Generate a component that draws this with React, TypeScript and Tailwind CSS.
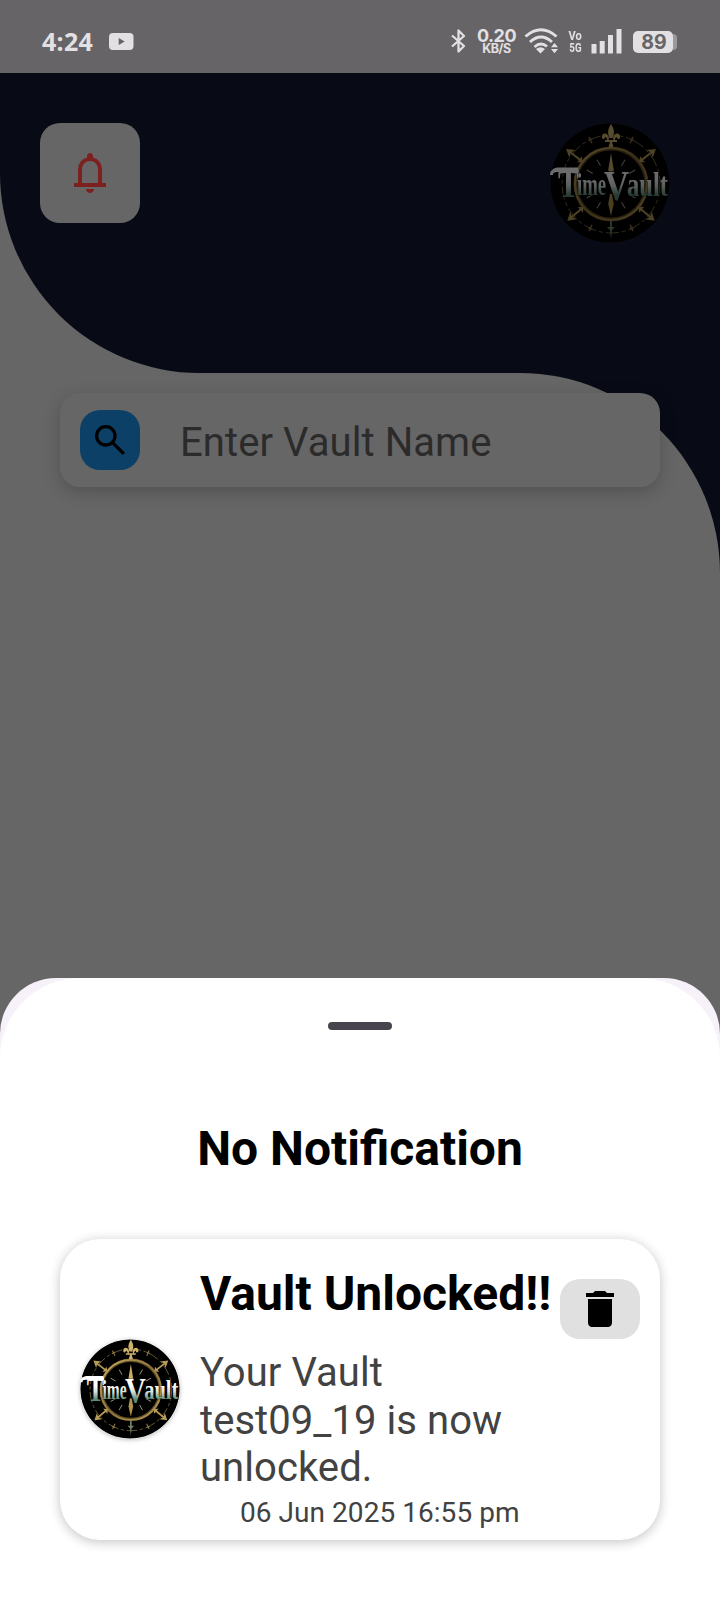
import React from "react";

function Logo({ className, id }: { className: string; id: string }) {
  const ticks = [30, 60, 120, 150, 210, 240, 300, 330];
  return (
    <svg viewBox="0 0 120 120" className={className} aria-hidden="true">
      <defs>
        <linearGradient id={`${id}-gold`} x1="0" y1="0" x2="1" y2="1">
          <stop offset="0" stopColor="#cdb267" />
          <stop offset="0.5" stopColor="#8c733a" />
          <stop offset="1" stopColor="#b39a55" />
        </linearGradient>
        <linearGradient id={`${id}-word`} gradientUnits="userSpaceOnUse" x1="0" y1="46" x2="0" y2="77">
          <stop offset="0.3" stopColor="#ffffff" />
          <stop offset="0.55" stopColor="#d5e2db" />
          <stop offset="0.85" stopColor="#5d8c75" />
        </linearGradient>
      </defs>
      <circle cx="60" cy="60" r="59.5" fill="#000" />
      <circle cx="61" cy="61" r="49" fill="none" stroke="#77683c" strokeWidth="1" strokeDasharray="13 3 4 3" />
      <circle cx="61" cy="61" r="35.500" fill="none" stroke="#5c4b22" strokeWidth="4" />
      <circle cx="61" cy="61" r="36" fill="none" stroke={`url(#${id}-gold)`} strokeWidth="2.200" />
      {ticks.map((a) => (
        <path key={a} d="M61 33v7" stroke="#a3a08f" strokeWidth="1" transform={`rotate(${a} 61 61)`} />
      ))}
      {[-52, 52, 130, 230].map((a) => (
        <g key={a} transform={`rotate(${a} 61 61)`} fill="#b79c57">
          <path d="M60 9h2v12h3l-4 4-4-4h3zM61 4l5 8-5-2-5 2z" />
        </g>
      ))}
      {[-25, 25, 155, 205].map((a) => (
        <path
          key={a}
          d="M61 9v7M59 12h4"
          stroke="#8e7a43"
          strokeWidth="1.3"
          transform={`rotate(${a} 61 61)`}
        />
      ))}
      <g fill="#d0b36a">
        <path d="M61 1c3 5 4 8 1.500 14H59.500C57 9 58 6 61 1z" />
        <path d="M59 15c-1-6-8-6-7 0 1 2 3 1 3-1 2 0 2 3 3 5zM63 15c1-6 8-6 7 0-1 2-3 1-3-1-2 0-2 3-3 5z" />
        <path d="M55 17h12v2H55zM60 19h2l1.500 5h-5z" />
      </g>
      <path d="M60 98h2v6h3l-3 3-1 9-1-9-3-3h3z" fill="#6f8465" />
      <path d="M61 30l2.800 17-1.800 4h-2l-1.800-4z" fill="#c8ad66" />
      <path d="M61 93l-2.800-12 1.800-10h2l1.800 10z" fill="#b19349" />
      <g
        fill={`url(#${id}-word)`}
        stroke="#000"
        strokeWidth="0.800"
        paintOrder="stroke"
        fontFamily="'Liberation Serif', serif"
        fontWeight="700"
      >
        <text x="8" y="74" fontSize="40" textLength="21" lengthAdjust="spacingAndGlyphs">T</text>
        <text x="27" y="71.500" fontSize="32" textLength="29" lengthAdjust="spacingAndGlyphs">ime</text>
        <text x="54" y="77" fontSize="42" textLength="25" lengthAdjust="spacingAndGlyphs">V</text>
        <text x="77" y="72.500" fontSize="33" textLength="41" lengthAdjust="spacingAndGlyphs">ault</text>
      </g>
      <path d="M0 52c0-5 4-7.500 9-7.500h19l1 4.500H10c-5 0-7 0-7 3z" fill="#fff" />
    </svg>
  );
}

function StatusBar() {
  return (
    <div className="flex h-[73px] items-start bg-[#676467] pt-[28px] pl-[42px] text-[#e2e0e2]">
      <span className="w-[67px] font-['Noto_Sans'] text-[25px] leading-[27px] font-bold tracking-[0.300px]">4:24</span>
      <svg className="mt-[5px] h-[17px] w-[25px]" viewBox="0 0 25 17">
        <rect width="24.500" height="17" rx="4" fill="#e2e0e2" />
        <path d="M9.700 5v7l6-3.500z" fill="#676467" />
      </svg>
      <svg className="ml-[317px] h-[26px] w-[15px]" viewBox="0 0 15 26" fill="none" stroke="#e2e0e2" strokeWidth="2.300">
        <path d="M1 7.500l12 10.500-5.500 5.500V2.500L13 8 1 18.500" strokeLinejoin="round" />
      </svg>
      <div className="ml-[10px] flex w-[41px] flex-col items-center font-['Inter'] font-bold">
        <span className="text-[18px] leading-[16px] tracking-[-0.500px]">0.20</span>
        <span className="text-[12.500px] leading-[10px] tracking-[-0.500px]">KB/S</span>
      </div>
      <svg className="ml-[7px] h-[26px] w-[36px]" viewBox="0 0 36 26" fill="none" stroke="#e2e0e2" strokeWidth="2.900">
        <path d="M1.500 8.500Q17-5 32.500 8.500M6 14Q17 4 28 14M10.500 19Q17 13.500 23 18.500" />
        <path d="M12 21q4.500-3.500 9 0L16.500 25.500zM30.500 15l3.500 4.200h-7zM30.500 25.300l3.500-4.200h-7z" fill="#e2e0e2" stroke="none" />
      </svg>
      <div className="ml-[7px] flex w-[17px] flex-col items-center pt-[2px] font-['Roboto'] text-[13.500px] leading-[11.500px] font-bold">
        <span className="scale-x-[0.82]">Vo</span>
        <span className="scale-x-[0.72]">5G</span>
      </div>
      <svg className="ml-[7px] h-[26px] w-[31px]" viewBox="0 0 31 26" fill="#e2e0e2">
        <path d="M.500 16h5v9.500h-5zM8.700 13h5v12.500h-5zM17 7h5v18.500h-5zM25.500 1h5v24.500h-5z" />
      </svg>
      <div className="mt-[3px] ml-[11px] flex">
        <span className="flex h-[22px] w-[40px] items-center justify-center rounded-[5px] bg-[#e2e0e2] pl-[2px] font-['Inter'] text-[19.500px] leading-[22px] font-bold text-[#676467]">
          89
        </span>
        <span className="mt-[3px] h-[16px] w-[4px] rounded-r-[4px] bg-[#9b999b]" />
      </div>
    </div>
  );
}

function VaultScreen() {
  return (
    <div className="bg-[#666666]">
      <header className="flex h-[300px] items-start justify-between rounded-bl-[200px] bg-[#080b15] pt-[50px] pr-[50px] pl-[40px]">
        <button className="flex size-[100px] items-center justify-center rounded-[20px] bg-[#666666]">
          <svg viewBox="0 0 24 24" className="size-12" fill="#7d2020">
            <path d="M4 19v-2h2v-7q0-2.075 1.250-3.687T10.500 4.200v-.700q0-.625.438-1.062T12 2t1.063.438T13.500 3.500v.700q2 .500 3.250 2.113T18 10v7h2v2zm8 3q-.825 0-1.412-.587T10 20h4q0 .825-.587 1.413T12 22M8 17h8v-7q0-1.650-1.175-2.825T12 6T9.175 7.175T8 10z" />
          </svg>
        </button>
        <Logo id="header" className="size-[120px] brightness-[0.42]" />
      </header>
      <div className="bg-[#080b15]">
        <main className="h-[1227px] rounded-tr-[200px] bg-[#666666] px-[60px] pt-[20px]">
          <div className="flex h-[94px] items-center rounded-[20px] bg-[#666666] pl-[20px] shadow-[0_5px_18px_rgba(0,0,0,0.200)]">
            <span className="flex size-[60px] items-center justify-center rounded-[20px] bg-[#0d4066]">
              <svg viewBox="0 0 24 24" className="size-10" fill="#000">
                <path d="m19.600 21l-6.300-6.300q-.750.600-1.725.950T9.500 16q-2.725 0-4.612-1.888T3 9.500t1.888-4.612T9.500 3t4.613 1.888T16 9.500q0 1.100-.350 2.075T14.700 13.300l6.300 6.300zM9.500 14q1.875 0 3.188-1.312T14 9.500t-1.312-3.187T9.500 5T6.313 6.313T5 9.500t1.313 3.188T9.500 14" />
              </svg>
            </span>
            <span className="ml-[40px] pt-[5px] text-[40px] leading-[47px] tracking-[0.080px] text-[#2b2b2b]">Enter Vault Name</span>
          </div>
        </main>
      </div>
    </div>
  );
}

function NotificationCard() {
  return (
    <article className="mx-[60px] mt-[55px] flex h-[301px] rounded-[40px] bg-white pl-[20px] shadow-[0_2px_12px_rgba(0,0,0,0.240)]">
      <Logo id="card" className="mt-[100px] size-[100px] rounded-full shadow-[0_1px_4px_rgba(0,0,0,0.250)]" />
      <div className="ml-[20px] flex w-[360px] flex-col">
        <h2 className="mt-[27px] text-[48px] leading-[56px] font-bold whitespace-nowrap text-black">Vault Unlocked!!</h2>
        <p className="mt-[27px] w-[340px] text-[40px] leading-[47.500px] tracking-[0.060px] text-[#424242]">
          Your Vault test09_19 is now unlocked.
        </p>
        <time className="mt-[4px] pl-[40px] text-[28px] leading-[33px] tracking-[0.050px] whitespace-nowrap text-[#424242]">
          06 Jun 2025 16:55 pm
        </time>
      </div>
      <button className="mt-[40px] flex h-[60px] w-[80px] items-center justify-center rounded-[20px] bg-[#e0e0e0]">
        <svg viewBox="0 0 24 24" className="size-12" fill="#000">
          <path d="M6 19c0 1.100.900 2 2 2h8c1.100 0 2-.900 2-2V7H6v12zM19 4h-3.500l-1-1h-5l-1 1H5v2h14V4z" />
        </svg>
      </button>
    </article>
  );
}

function NotificationSheet() {
  return (
    <section className="absolute inset-x-0 bottom-0 h-[622px] overflow-hidden rounded-t-[56px] bg-[#f7f2fa]">
      <div className="flex h-full flex-col rounded-t-[80px] bg-white">
        <div className="mx-auto mt-[44px] h-[8px] w-[64px] rounded-full bg-[#49454f]" />
        <h1 className="mt-[84px] text-center text-[48px] leading-[70px] font-bold text-black">No Notification</h1>
        <NotificationCard />
      </div>
    </section>
  );
}

export default function App() {
  return (
    <div className="relative h-[1600px] w-[720px] overflow-hidden font-['Roboto',sans-serif]">
      <StatusBar />
      <VaultScreen />
      <NotificationSheet />
    </div>
  );
}
